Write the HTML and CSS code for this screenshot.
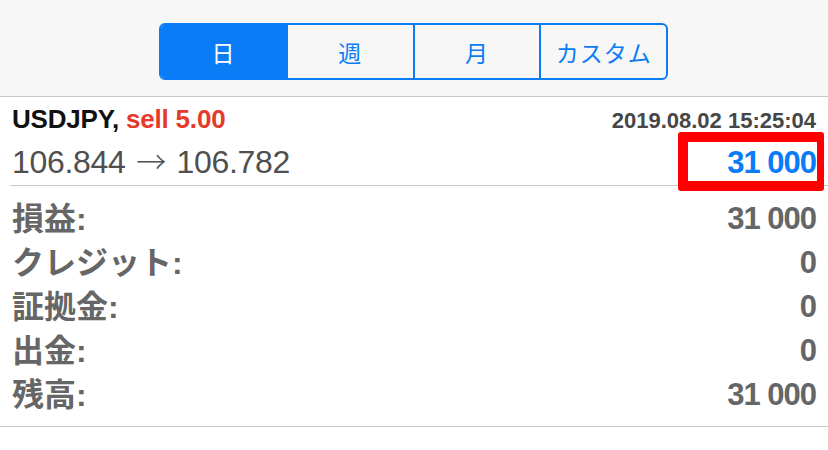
FILE: index.html
```html
<!DOCTYPE html>
<html lang="ja">
<head>
<meta charset="utf-8">
<title>Trade</title>
<link rel="stylesheet" href="styles.css">
</head>
<body>
  <header class="header">
    <div class="segmented">
      <div class="seg seg-active">日</div>
      <div class="seg">週</div>
      <div class="seg">月</div>
      <div class="seg">カスタム</div>
    </div>
  </header>
  <section class="trade">
    <div class="trade-row top-row">
      <div class="symbol">USDJPY, <span class="sell">sell 5.00</span></div>
      <div class="date">2019.08.02 15:25:04</div>
    </div>
    <div class="trade-row price-row">
      <div class="prices">106.844 <span class="arrow">→</span> 106.782</div>
      <div class="profit"><span class="profit-value">31 000</span></div>
    </div>
  </section>
  <div class="divider"></div>
  <section class="summary">
    <div class="sum-row"><span class="label">損益:</span><span class="value">31 000</span></div>
    <div class="sum-row"><span class="label">クレジット:</span><span class="value">0</span></div>
    <div class="sum-row"><span class="label">証拠金:</span><span class="value">0</span></div>
    <div class="sum-row"><span class="label">出金:</span><span class="value">0</span></div>
    <div class="sum-row"><span class="label">残高:</span><span class="value">31 000</span></div>
  </section>
  <div class="bottom-line"></div>
</body>
</html>
```
FILE: styles.css
```css
html, body {
  margin: 0;
  padding: 0;
  background: #ffffff;
}
body {
  width: 828px;
  height: 450px;
  overflow: hidden;
  font-family: "Liberation Sans", "Noto Sans CJK JP", sans-serif;
}
.header {
  box-sizing: border-box;
  height: 97px;
  background: #f7f7f7;
  border-bottom: 1px solid #c8c8c8;
  padding-top: 23px;
  display: flex;
  justify-content: center;
}
.segmented {
  box-sizing: border-box;
  width: 509px;
  height: 57px;
  border: 2px solid #0a7cf5;
  border-radius: 6px;
  display: flex;
  overflow: hidden;
  margin-left: -1px;
}
.seg {
  flex: 1;
  display: flex;
  align-items: center;
  justify-content: center;
  font-family: "Noto Sans CJK JP", sans-serif;
  font-size: 23px;
  color: #0a7cf5;
  border-left: 2px solid #0a7cf5;
  letter-spacing: 1px;
}
.seg:first-child {
  border-left: none;
}
.seg-active {
  background: #0a7cf5;
  color: #ffffff;
}
.trade {
  padding: 7px 12px 0 12px;
}
.trade-row {
  display: flex;
  justify-content: space-between;
  align-items: baseline;
}
.top-row {
  line-height: 30px;
}
.symbol {
  font-size: 26px;
  font-weight: bold;
  color: #111111;
  letter-spacing: -0.2px;
}
.sell {
  color: #e63a2b;
}
.date {
  font-size: 22px;
  font-weight: bold;
  color: #464646;
}
.price-row {
  margin-top: 8px;
  line-height: 36px;
}
.prices {
  font-size: 32px;
  color: #4f4f4f;
  letter-spacing: -0.3px;
}
.arrow {
  font-family: "Noto Sans CJK JP", sans-serif;
  font-size: 30px;
  font-weight: 300;
  line-height: 1;
  margin: 0 2px;
}
.profit {
  font-size: 31px;
  font-weight: bold;
  color: #0a7cf5;
  letter-spacing: -1px;
}
.profit-value {
  position: relative;
  display: inline-block;
}
.profit-value::after {
  content: "";
  position: absolute;
  right: -8px;
  top: -13px;
  width: 146px;
  height: 59px;
  box-sizing: border-box;
  border: 10px solid #ff0000;
  border-right-width: 7px;
  border-radius: 3px;
}
.divider {
  height: 1px;
  background: #c8c8c8;
  margin: 4px 0 0 10px;
}
.summary {
  padding: 11px 12px 9px 12px;
}
.sum-row {
  height: 44px;
  display: flex;
  justify-content: space-between;
  align-items: center;
  line-height: 44px;
  font-weight: bold;
  color: #666666;
}
.label {
  font-size: 32px;
  font-family: "Liberation Sans", "Noto Sans CJK JP", sans-serif;
}
.value {
  font-size: 31px;
  letter-spacing: -1px;
}
.bottom-line {
  height: 1px;
  background: #c8c8c8;
}
```
